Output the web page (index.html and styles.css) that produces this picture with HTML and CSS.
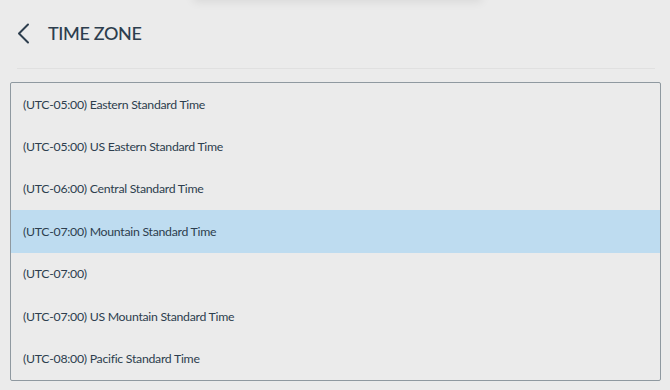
FILE: index.html
```html
<!DOCTYPE html>
<html lang="en">
<head>
<meta charset="utf-8">
<title>Time Zone</title>
<link rel="stylesheet" href="styles.css">
</head>
<body>
<div class="top-shadow"></div>
<header class="header">
  <button class="back" aria-label="Back">
    <svg width="13" height="21" viewBox="0 0 13 21"><path d="M11 1.5 L2 10.5 L11 19.5" fill="none" stroke="#2d3e4e" stroke-width="2" stroke-linecap="round" stroke-linejoin="round"/></svg>
  </button>
  <h1 class="title">TIME ZONE</h1>
</header>
<div class="divider"></div>
<ul class="list">
  <li class="item">(UTC-05:00) Eastern Standard Time</li>
  <li class="item">(UTC-05:00) US Eastern Standard Time</li>
  <li class="item">(UTC-06:00) Central Standard Time</li>
  <li class="item selected">(UTC-07:00) Mountain Standard Time</li>
  <li class="item">(UTC-07:00)</li>
  <li class="item">(UTC-07:00) US Mountain Standard Time</li>
  <li class="item">(UTC-08:00) Pacific Standard Time</li>
</ul>
</body>
</html>
```
FILE: styles.css
```css
html, body {
  margin: 0;
  padding: 0;
  background: #ebebeb;
  font-family: Lato, "Open Sans", "Liberation Sans", sans-serif;
  color: #2d3e4e;
  overflow: hidden;
}
.top-shadow {
  position: absolute;
  top: -10px;
  left: 195px;
  width: 285px;
  height: 10px;
  box-shadow: 0 0 10px 2px rgba(0,0,0,0.08);
  background: #e6e6e6;
}
.header {
  display: flex;
  align-items: center;
  height: 66px;
  padding: 0 17px;
}
.back {
  border: 0;
  background: none;
  padding: 0;
  margin: 0 18px 0 0;
  width: 13px;
  height: 21px;
  display: flex;
  align-items: center;
}
.title {
  margin: 0;
  font-size: 18px;
  font-weight: 500;
  letter-spacing: -0.35px;
  color: #2d3e4e;
}
.divider {
  height: 1px;
  background: #e0e0e0;
  margin: 2px 15px 0 17px;
}
.list {
  list-style: none;
  margin: 13px 9px 0 10px;
  padding: 0;
  border: 1.5px solid #8f99a0;
  border-radius: 2px;
}
.item {
  height: 42.4px;
  display: flex;
  align-items: center;
  padding-left: 12px;
  font-size: 12.3px;
  letter-spacing: -0.28px;
  color: #2d3e4e;
}
.selected {
  background: #bedcf0;
}
```
